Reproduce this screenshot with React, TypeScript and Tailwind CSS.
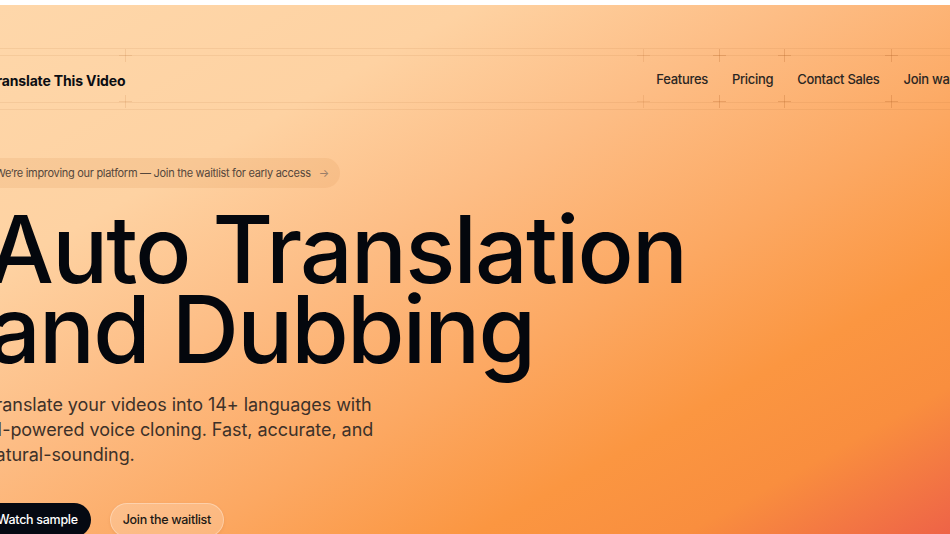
import React from "react";

const NAV = ["Features", "Pricing", "Contact Sales", "Join waitlist"];

function Cross({ side, edge }: { side: "left" | "right"; edge: "top" | "bottom" }) {
  return (
    <span
      className={
        "pointer-events-none absolute h-[13px] w-[13px] " +
        (side === "left" ? "-left-[7px] " : "-right-[6px] ") +
        (edge === "top" ? "-top-[7px]" : "-bottom-[6px]")
      }
    >
      <span className="absolute left-0 top-[6px] h-px w-[13px] bg-[#b4672a]/15" />
      <span className="absolute left-[6px] top-0 h-[13px] w-px bg-[#b4672a]/15" />
    </span>
  );
}

function NavItem({ label, last }: { label: string; last?: boolean }) {
  return (
    <div className="relative flex h-full items-center px-3">
      <Cross side="left" edge="top" />
      <Cross side="left" edge="bottom" />
      {last ? null : (
        <>
          <Cross side="right" edge="top" />
          <Cross side="right" edge="bottom" />
        </>
      )}
      <span className="whitespace-nowrap pt-[2px] text-[13px] font-medium tracking-[-0.3px] text-[#2b2622]">{label}</span>
    </div>
  );
}

export default function App() {
  return (
    <div className="h-[534px] w-[950px] overflow-hidden bg-white pt-[5px] font-['Inter',sans-serif]">
      <div className="h-[529px] w-full overflow-hidden bg-[linear-gradient(to_bottom_right,#fed7aa_0%,#fed2a2_25%,#fdbd85_42%,#fca862_60%,#fb9641_75%,#f98e3e_86%,#ee6347_100%)]">
        {/* header with grid lines */}
        <div className="pt-[43px]">
          <div className="h-[7px] border-t border-[#a8602a]/10" />
          <div className="h-[48px] border-y border-[#a8602a]/10">
            <div className="-ml-[12px] flex h-full items-center">
              <div className="relative flex h-full items-center pr-[1px]">
                <span className="whitespace-nowrap pt-[2px] text-[14px] font-bold tracking-[-0.15px] text-[#0b0d12]">
                  Translate This Video
                </span>
                <Cross side="right" edge="top" />
                <Cross side="right" edge="bottom" />
              </div>
              <nav className="ml-[518px] flex h-full items-center">
                {NAV.map((n, i) => (
                  <NavItem key={n} label={n} last={i === NAV.length - 1} />
                ))}
              </nav>
            </div>
          </div>
          <div className="h-[7px] border-b border-[#a8602a]/10" />
        </div>

        {/* hero */}
        <div className="-ml-[12px] flex flex-col items-start pt-[48px]">
          <div className="-ml-[5px] flex h-[30px] items-center gap-2 rounded-full bg-[#d98a4a]/15 pl-[12px] pr-[11px]">
            <span className="whitespace-nowrap text-[11px] tracking-[-0.3px] text-[#55473c]">
              We’re improving our platform — Join the waitlist for early access
            </span>
            <span className="text-[11px] text-[#9a7e69]">→</span>
          </div>

          <h1 className="mt-[21px] text-[93px] font-medium leading-[80px] tracking-[-1.8px] text-[#04070d]">
            Auto Translation
            <br />
            and Dubbing
          </h1>

          <p className="-ml-[3px] mt-[23px] w-[420px] text-[18px] leading-[25px] tracking-[-0.05px] text-[#3d3129]">
            Translate your videos into 14+ languages with
            <br />
            AI-powered voice cloning. Fast, accurate, and
            <br />
            natural-sounding.
          </p>

          <div className="-ml-[4px] mt-[36px] flex items-center gap-[19px]">
            <button className="h-[34px] rounded-full bg-[#050912] px-[13px] text-[12.5px] font-medium tracking-[-0.3px] text-white">
              Watch sample
            </button>
            <button className="h-[34px] rounded-full border border-white/30 bg-white/20 px-[12px] text-[12.5px] font-medium tracking-[-0.3px] text-[#1d1915] shadow-[0_1px_3px_rgba(160,80,20,0.15)]">
              Join the waitlist
            </button>
          </div>
        </div>
      </div>
    </div>
  );
}
